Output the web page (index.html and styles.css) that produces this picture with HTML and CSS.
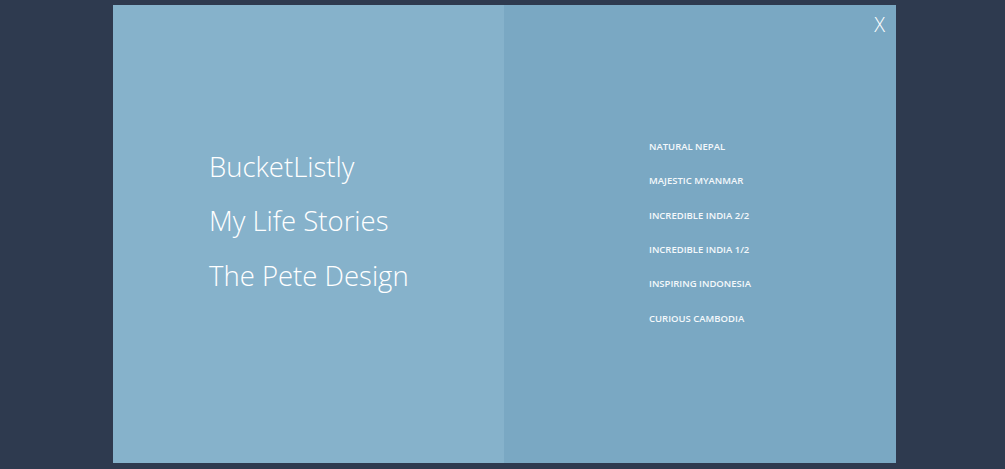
FILE: index.html
```html
<!DOCTYPE html>
<html>
<head>
<meta charset="utf-8">
<link rel="stylesheet" href="styles.css">
</head>
<body>
<div class="overlay">
  <div class="col col-left">
    <ul class="sites">
      <li>BucketListly</li>
      <li>My Life Stories</li>
      <li>The Pete Design</li>
    </ul>
  </div>
  <div class="col col-right">
    <ul class="posts">
      <li>Natural Nepal</li>
      <li>Majestic Myanmar</li>
      <li>Incredible India 2/2</li>
      <li>Incredible India 1/2</li>
      <li>Inspiring Indonesia</li>
      <li>Curious Cambodia</li>
    </ul>
  </div>
  <span class="close">X</span>
</div>
</body>
</html>
```
FILE: styles.css
```css
html, body {
  margin: 0;
  padding: 0;
  background: #2e3a4f;
  height: 100%;
}
body {
  font-family: "Open Sans", "Liberation Sans", sans-serif;
  color: #fff;
}
.overlay {
  position: relative;
  margin: 5px 0 0 113px;
  width: 783px;
  height: 458px;
  display: flex;
}
.col {
  box-sizing: border-box;
  display: flex;
  flex-direction: column;
  justify-content: center;
}
.col-left {
  width: 391px;
  background: #86b2cb;
  padding-left: 96px;
  padding-bottom: 25px;
}
.col-right {
  width: 392px;
  background: #7aa8c3;
  padding-left: 145px;
  padding-bottom: 2px;
}
ul {
  list-style: none;
  margin: 0;
  padding: 0;
}
.sites li {
  font-size: 27.5px;
  font-weight: 300;
  line-height: 54.5px;
}
.posts li {
  font-size: 9.5px;
  font-weight: 600;
  text-transform: uppercase;
  letter-spacing: 0;
  line-height: 34.4px;
  color: #f4f8fb;
}
.close {
  position: absolute;
  top: 5px;
  right: 11px;
  font-size: 20px;
  font-weight: 300;
  line-height: 30px;
}
```
